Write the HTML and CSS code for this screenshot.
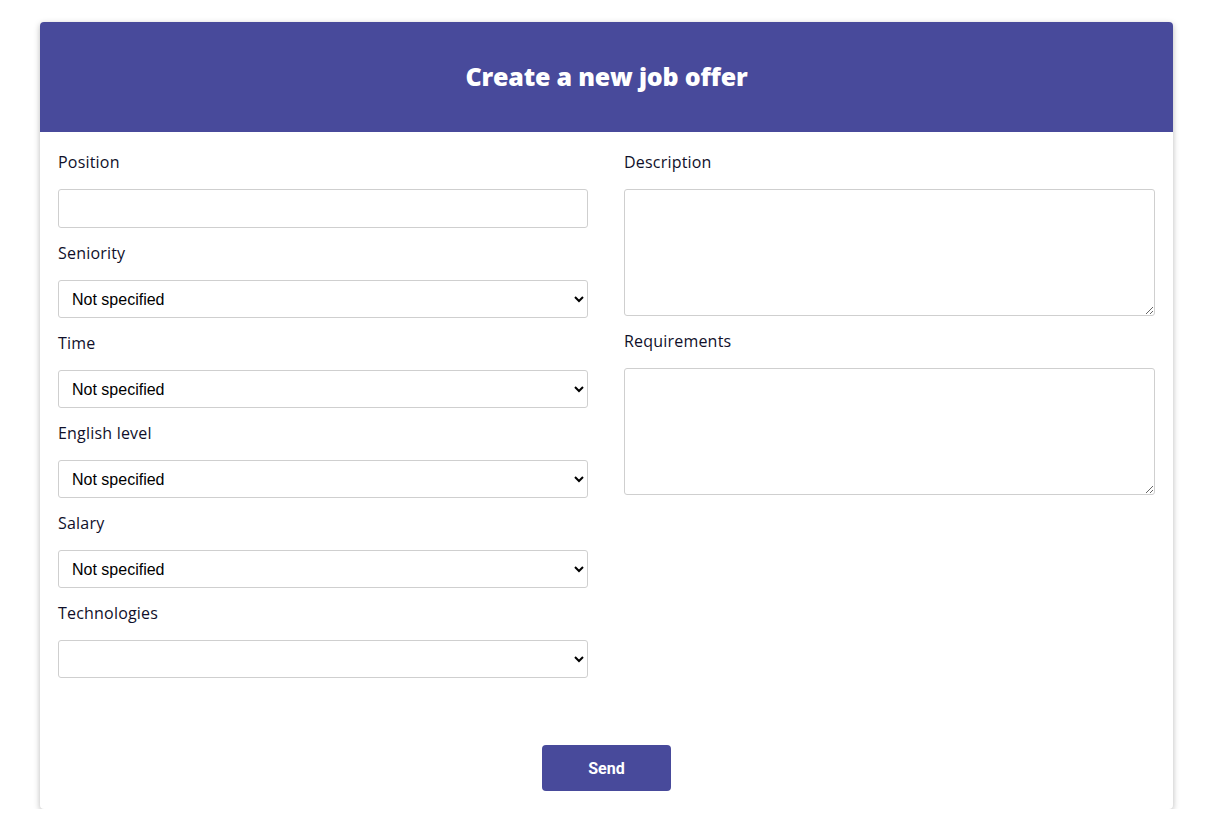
FILE: index.html
```html
<!DOCTYPE html>
<html lang="en">
<head>
<meta charset="utf-8">
<title>Create a new job offer</title>
<link rel="stylesheet" href="styles.css">
</head>
<body>
<div class="page">
  <form class="card">
    <header class="card-header">
      <h1 class="title">Create a new job offer</h1>
    </header>
    <div class="card-body">
      <div class="columns">
        <div class="column column-left">
          <div class="field">
            <label class="label">Position</label>
            <input class="input" type="text">
          </div>
          <div class="field">
            <label class="label">Seniority</label>
            <select class="select"><option>Not specified</option></select>
          </div>
          <div class="field">
            <label class="label">Time</label>
            <select class="select"><option>Not specified</option></select>
          </div>
          <div class="field">
            <label class="label">English level</label>
            <select class="select"><option>Not specified</option></select>
          </div>
          <div class="field">
            <label class="label">Salary</label>
            <select class="select"><option>Not specified</option></select>
          </div>
          <div class="field">
            <label class="label">Technologies</label>
            <select class="select"><option></option></select>
          </div>
        </div>
        <div class="column column-right">
          <div class="field">
            <label class="label">Description</label>
            <textarea class="textarea"></textarea>
          </div>
          <div class="field">
            <label class="label">Requirements</label>
            <textarea class="textarea"></textarea>
          </div>
        </div>
      </div>
      <div class="actions">
        <button class="button" type="button">Send</button>
      </div>
    </div>
  </form>
</div>
</body>
</html>
```

FILE: styles.css
```css
* { box-sizing: border-box; }
html, body { margin: 0; padding: 0; background: #ffffff; }
body { font-family: "Open Sans", "Liberation Sans", sans-serif; }

.page {
  padding: 22px 36px 0 40px;
}

.card {
  display: flex;
  flex-direction: column;
  background: #ffffff;
  border-radius: 4px;
  box-shadow: 0 2px 6px rgba(0, 0, 0, 0.28);
  overflow: hidden;
}

.card-header {
  height: 110px;
  background: #484a9b;
  display: flex;
  align-items: center;
  justify-content: center;
  padding-bottom: 3px;
}

.title {
  margin: 0;
  color: #ffffff;
  font-family: "Open Sans", sans-serif;
  font-weight: 800;
  font-size: 25px;
  letter-spacing: -0.2px;
}

.card-body {
  padding: 18px;
}

.columns {
  display: flex;
  gap: 36px;
}

.column {
  display: flex;
  flex-direction: column;
  gap: 13px;
}

.column-left { flex: 0 0 530px; }
.column-right { flex: 1 1 0; }

.field {
  display: flex;
  flex-direction: column;
}

.label {
  font-size: 16px;
  line-height: 24px;
  letter-spacing: 0.2px;
  color: #10102a;
  margin-bottom: 15px;
}

.input {
  height: 39px;
  border: 1px solid #cfcfcf;
  border-radius: 3px;
  font-size: 16px;
  padding: 0 12px;
}

.select {
  height: 38px;
  border: 1px solid #cfcfcf;
  border-radius: 3px;
  background: #ffffff;
  font-family: "Liberation Sans", Arial, sans-serif;
  font-size: 16px;
  color: #000000;
  padding: 0 8px 0 9px;
}

.textarea {
  height: 127px;
  border: 1px solid #cfcfcf;
  border-radius: 3px;
  resize: vertical;
  font-size: 16px;
}

.actions {
  display: flex;
  justify-content: center;
  padding-top: 67px;
}

.button {
  width: 129px;
  height: 46px;
  border: none;
  border-radius: 4px;
  background: #484a9b;
  color: #ffffff;
  font-family: Roboto, "Liberation Sans", sans-serif;
  font-weight: 700;
  font-size: 16px;
}
```
